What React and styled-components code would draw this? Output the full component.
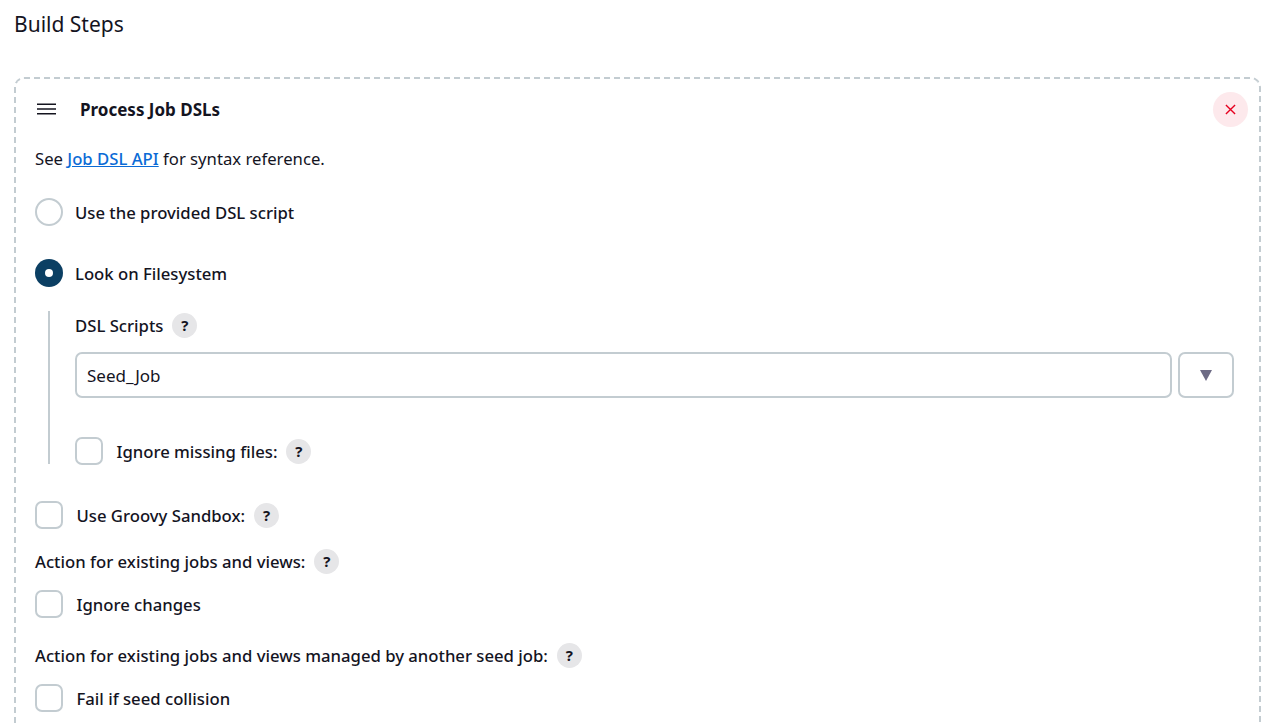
import React from 'react';
import styled, { createGlobalStyle } from 'styled-components';

const GlobalStyle = createGlobalStyle`
  html, body {
    margin: 0;
    height: 100%;
    overflow: hidden;
    background: #fff;
    font-family: "Noto Sans", "Open Sans", sans-serif;
    color: #14141f;
  }
`;

function Help() {
  return <HelpBadge>?</HelpBadge>;
}

function CheckRow({ label, help, mt }) {
  return (
    <Row $mt={mt}>
      <CheckBox />
      <CheckLabel>{label}</CheckLabel>
      {help && <Help />}
    </Row>
  );
}

export default function App() {
  return (
    <Page>
      <GlobalStyle />
      <Title>Build Steps</Title>
      <Card>
        <CardHead>
          <Grip viewBox="0 0 20 12">
            <path d="M0 1h20M0 6h20M0 11h20" stroke="#14141f" strokeWidth="1.6" fill="none" />
          </Grip>
          <CardTitle>Process Job DSLs</CardTitle>
          <CloseButton>
            <svg width="11" height="11" viewBox="0 0 12 12">
              <path d="M1 1l10 10M11 1L1 11" stroke="#e6001f" strokeWidth="1.5" fill="none" />
            </svg>
          </CloseButton>
        </CardHead>
        <Note>
          See <a href="#api">Job DSL API</a> for syntax reference.
        </Note>
        <Row $mt={27}>
          <Radio />
          <RadioLabel>Use the provided DSL script</RadioLabel>
        </Row>
        <Row $mt={33}>
          <Radio $on />
          <RadioLabel>Look on Filesystem</RadioLabel>
        </Row>
        <Nested>
          <LabelRow>
            DSL Scripts
            <Help />
          </LabelRow>
          <InputRow>
            <TextInput>Seed_Job</TextInput>
            <DropButton>
              <svg width="14" height="11" viewBox="0 0 14 11">
                <path d="M1 0h12L7 11z" fill="#6d6b85" />
              </svg>
            </DropButton>
          </InputRow>
          <Row $mt={39}>
            <CheckBox />
            <CheckLabel>Ignore missing files:</CheckLabel>
            <Help />
          </Row>
        </Nested>
        <CheckRow label="Use Groovy Sandbox:" help mt={37} />
        <LabelRow $mt={18}>
          Action for existing jobs and views:
          <Help />
        </LabelRow>
        <CheckRow label="Ignore changes" mt={15} />
        <LabelRow $mt={23}>
          Action for existing jobs and views managed by another seed job:
          <Help />
        </LabelRow>
        <CheckRow label="Fail if seed collision" mt={15} />
      </Card>
    </Page>
  );
}

const Page = styled.div`
  padding: 8px 14px 0;
`;

const Title = styled.h2`
  margin: 0 0 37px;
  font-size: 21px;
  font-weight: 400;
  line-height: 32px;
`;

const Card = styled.div`
  box-sizing: border-box;
  width: 1247px;
  height: 800px;
  padding: 13px 25px 0 19px;
  border: 2px dashed #c3ccd1;
  border-bottom: 0;
  border-radius: 10px 10px 0 0;
`;

const CardHead = styled.div`
  display: flex;
  align-items: center;
  height: 34px;
`;

const Grip = styled.svg`
  width: 19px;
  height: 12px;
  margin-left: 2px;
`;

const CardTitle = styled.div`
  margin-left: 24px;
  font-size: 17px;
  font-weight: 700;
`;

const CloseButton = styled.div`
  display: flex;
  align-items: center;
  justify-content: center;
  width: 35px;
  height: 35px;
  margin-left: auto;
  margin-right: -14px;
  border-radius: 50%;
  background: #fde9ec;
`;

const Note = styled.div`
  margin-top: 21px;
  font-size: 16.7px;
  line-height: 24px;
  a {
    color: #0b6bd6;
    font-weight: 500;
  }
`;

const Row = styled.div`
  display: flex;
  align-items: center;
  height: 28px;
  margin-top: ${(p) => p.$mt || 0}px;
`;

const Radio = styled.span`
  box-sizing: border-box;
  position: relative;
  flex: none;
  width: 28px;
  height: 28px;
  border-radius: 50%;
  background: ${(p) => (p.$on ? '#0b3f63' : '#fff')};
  border: ${(p) => (p.$on ? '0' : '2.5px solid #c3ccd1')};
  &::after {
    content: '';
    display: ${(p) => (p.$on ? 'block' : 'none')};
    position: absolute;
    left: 10px;
    top: 10px;
    width: 8px;
    height: 8px;
    border-radius: 50%;
    background: #fff;
  }
`;

const RadioLabel = styled.label`
  margin-left: 12px;
  font-size: 16.7px;
  font-weight: 500;
`;

const CheckBox = styled.span`
  box-sizing: border-box;
  flex: none;
  width: 28px;
  height: 28px;
  border: 2.5px solid #c3ccd1;
  border-radius: 7px;
`;

const CheckLabel = styled.label`
  margin-left: 13.5px;
  font-size: 16.7px;
  font-weight: 500;
`;

const Nested = styled.div`
  margin: 24px 0 0 13px;
  padding: 0 0 0 25px;
  border-left: 2px solid #c3ccd1;
  height: 153px;
`;

const LabelRow = styled.div`
  display: flex;
  align-items: center;
  height: 28px;
  margin-top: ${(p) => p.$mt || 0}px;
  font-size: 16.7px;
  font-weight: 500;
`;

const HelpBadge = styled.span`
  display: flex;
  align-items: center;
  justify-content: center;
  flex: none;
  width: 25px;
  height: 25px;
  margin-left: 9px;
  border-radius: 50%;
  background: #e6e6e8;
  font-size: 15px;
  font-weight: 700;
`;

const InputRow = styled.div`
  display: flex;
  gap: 6px;
  margin-top: 13px;
`;

const TextInput = styled.div`
  box-sizing: border-box;
  flex: 1;
  height: 46px;
  padding: 0 10px;
  border: 2px solid #c3ccd1;
  border-radius: 7px;
  font-size: 17px;
  line-height: 43px;
`;

const DropButton = styled.div`
  box-sizing: border-box;
  display: flex;
  align-items: center;
  justify-content: center;
  width: 56px;
  height: 46px;
  border: 2px solid #c3ccd1;
  border-radius: 7px;
`;
